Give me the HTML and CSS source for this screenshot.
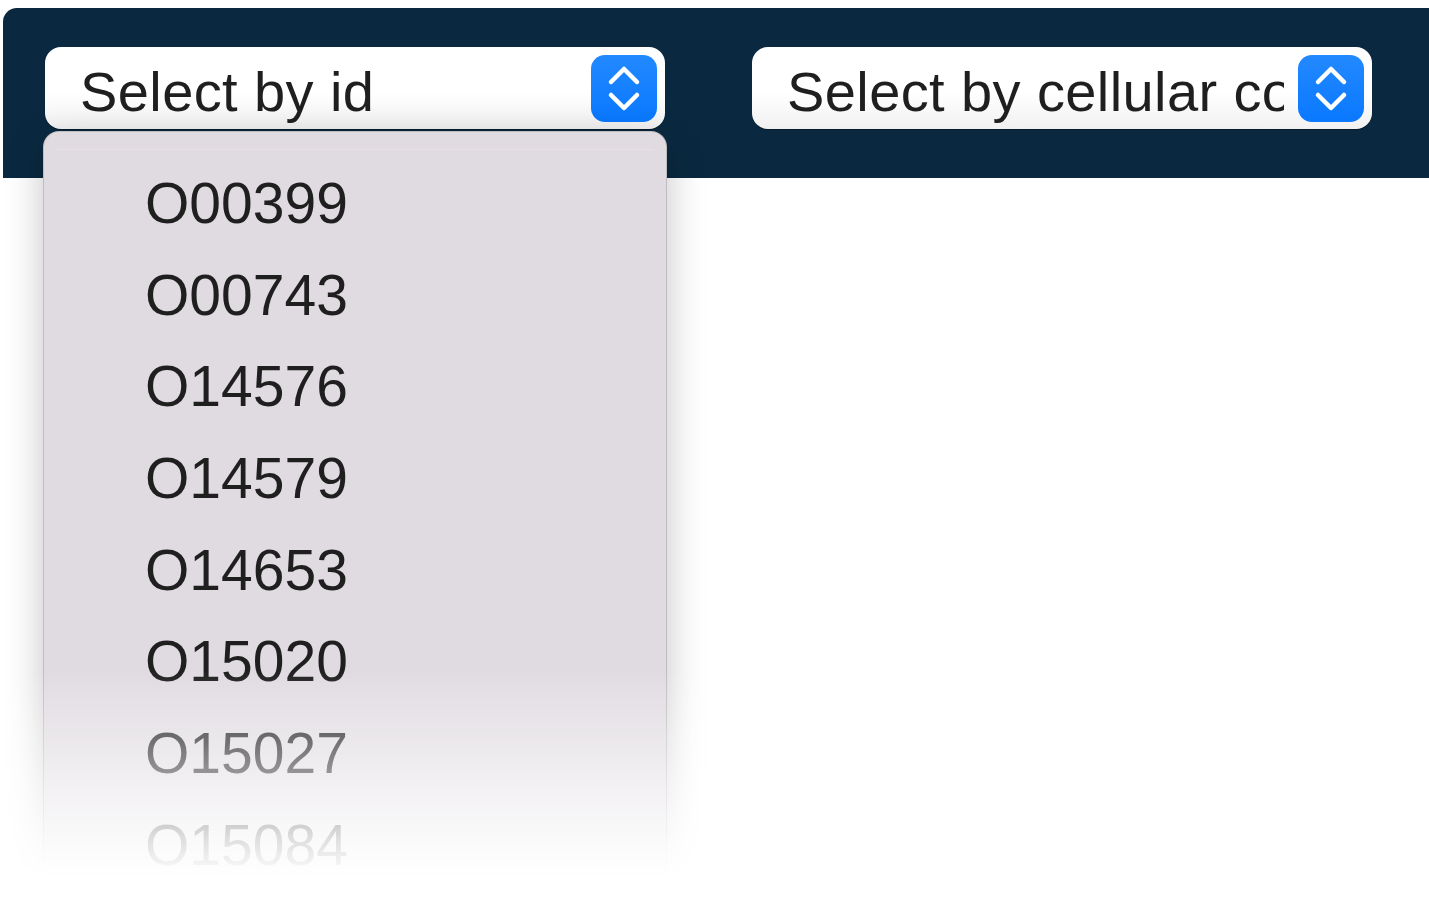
FILE: index.html
```html
<!DOCTYPE html>
<html lang="en">
<head>
  <meta charset="UTF-8">
  <title>Protein Selector</title>
  <link rel="stylesheet" href="styles.css">
</head>
<body>

<div class="topbar">
  <div class="picker">
    <span class="picker-label">Select by id</span>
    <span class="stepper">
      <svg width="66" height="67" viewBox="0 0 66 67">
        <path d="M20 27 L33 14 L46 27" />
        <path d="M20 40 L33 53 L46 40" />
      </svg>
    </span>
  </div>
  <div class="picker">
    <span class="picker-label">Select by cellular component</span>
    <span class="stepper">
      <svg width="66" height="67" viewBox="0 0 66 67">
        <path d="M20 27 L33 14 L46 27" />
        <path d="M20 40 L33 53 L46 40" />
      </svg>
    </span>
  </div>
</div>

<!-- open menu of the first picker -->
<div class="menu-wrap">
  <div class="menu">
    <div class="menu-rule"></div>
    <ul class="menu-list">
      <li>O00399</li>
      <li>O00743</li>
      <li>O14576</li>
      <li>O14579</li>
      <li>O14653</li>
      <li>O15020</li>
      <li>O15027</li>
      <li>O15084</li>
    </ul>
  </div>
</div>

</body>
</html>
```

FILE: styles.css
```css
body {
  margin: 0;
  padding: 8px 0 0 3px;
  background: #ffffff;
  font-family: "Liberation Sans", Arial, sans-serif;
  color: #1f1f1f;
  overflow: hidden;
}
.topbar {
  display: flex;
  gap: 87px;
  height: 170px;
  box-sizing: border-box;
  padding: 39px 0 0 42px;
  background: #0a2940;
  border-radius: 14px 0 0 0;
}
.picker {
  position: relative;
  display: flex;
  align-items: center;
  width: 620px;
  height: 82px;
  box-sizing: border-box;
  padding: 0 8px 0 35px;
  border-radius: 16px;
  background: linear-gradient(to bottom, #ffffff 55%, #f1f1f1 100%);
  box-shadow: 0 1px 1px rgba(0, 0, 0, 0.35);
}
.picker-label {
  flex: 1;
  overflow: hidden;
  white-space: nowrap;
  font-size: 56px;
  line-height: 70px;
  padding-top: 8px;
  margin-right: 14px;
  letter-spacing: 0.4px;
}
.stepper {
  display: block;
  width: 66px;
  height: 67px;
  border-radius: 14px;
  background: linear-gradient(to bottom, #2289ff, #0a78ff);
}
.stepper svg {
  display: block;
  fill: none;
  stroke: #ffffff;
  stroke-width: 4.5;
  stroke-linecap: round;
  stroke-linejoin: round;
}
.menu-wrap {
  position: absolute;
  left: 0;
  top: 86px;
  width: 712px;
  height: 800px;
  padding: 45px 0 0 43px;
  box-sizing: border-box;
  -webkit-mask-image: linear-gradient(to bottom, #000 0, #000 73%, rgba(0,0,0,0.55) 84%, rgba(0,0,0,0.15) 94%, transparent 99%);
  mask-image: linear-gradient(to bottom, #000 0, #000 73%, rgba(0,0,0,0.55) 84%, rgba(0,0,0,0.15) 94%, transparent 99%);
}
.menu {
  width: 624px;
  height: 755px;
  overflow: hidden;
  box-sizing: border-box;
  padding: 17px 12px 0;
  background: #e0dbe1;
  border: 1px solid rgba(0, 0, 0, 0.14);
  border-radius: 16px 16px 0 0;
  box-shadow: 0 12px 38px rgba(0, 0, 0, 0.24);
}
.menu-rule {
  height: 1px;
  background: #e9e1df;
}
.menu-list {
  list-style: none;
  margin: 0;
  padding: 8px 0 0 89px;
}
.menu-list li {
  height: 91.7px;
  line-height: 91.7px;
  font-size: 57px;
}
```
